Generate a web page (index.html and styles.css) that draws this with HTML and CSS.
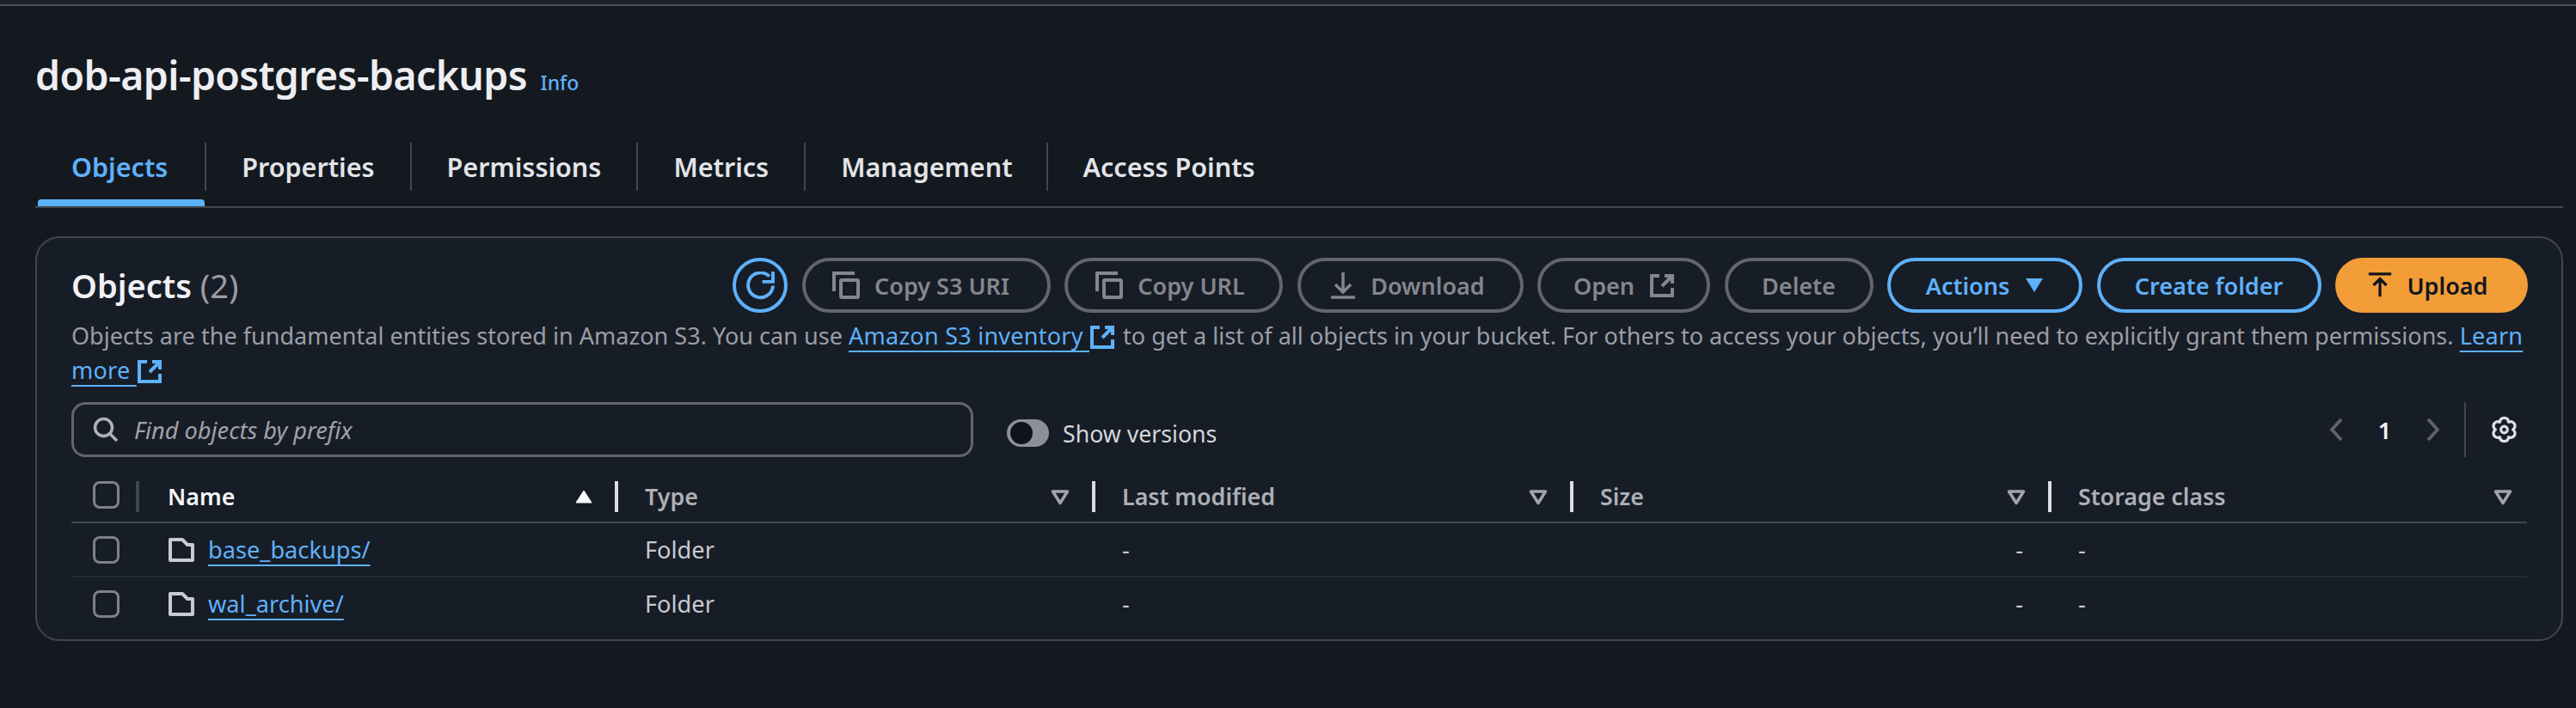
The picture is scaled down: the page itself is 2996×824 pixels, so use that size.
FILE: index.html
```html
<!DOCTYPE html>
<html lang="en">
<head>
<meta charset="utf-8">
<title>dob-api-postgres-backups</title>
<link rel="stylesheet" href="styles.css">
</head>
<body>
<svg width="0" height="0" class="defs">
  <symbol id="ext" viewBox="0 0 28 28"><path d="M11 3H2v23h24v-9M17 3h9v9M26 3 14 15" fill="none" stroke="currentColor" stroke-width="4"/></symbol>
  <symbol id="copy" viewBox="0 0 32 32"><path d="M26 2H2v21" fill="none" stroke="currentColor" stroke-width="4"/><rect x="10" y="10" width="20" height="20" rx="1" fill="none" stroke="currentColor" stroke-width="4"/></symbol>
  <symbol id="filter" viewBox="0 0 22 18"><path d="M2.500 2h17L11 15.500z" fill="none" stroke="currentColor" stroke-width="3.500" stroke-linejoin="round"/></symbol>
  <symbol id="folder" viewBox="0 0 30 28"><path d="M2 2h14l6 6h6v18H2z" fill="none" stroke="currentColor" stroke-width="4" stroke-linejoin="round"/></symbol>
</svg>
<div class="topstrip"></div>
<main class="page">
  <h1 class="title">dob-api-postgres-backups <a class="info">Info</a></h1>
  <nav class="tabs">
    <a class="tab tab-active">Objects</a>
    <a class="tab">Properties</a>
    <a class="tab">Permissions</a>
    <a class="tab">Metrics</a>
    <a class="tab tab-mgmt">Management</a>
    <a class="tab tab-last">Access Points</a>
  </nav>
  <section class="card">
    <div class="head">
      <h2 class="heading">Objects <span class="count">(2)</span></h2>
      <div class="actions">
        <button class="btn btn-round"><svg width="33" height="33" viewBox="0 0 32 32"><path d="M26 5.500A14 14 0 1 0 30 16" fill="none" stroke="currentColor" stroke-width="3.800"/><path d="M18 11.500h12V0" fill="none" stroke="currentColor" stroke-width="3.800"/></svg></button>
        <button class="btn btn-off btn-s3"><svg class="ic" width="32" height="32"><use href="#copy"/></svg>Copy S3 URI</button>
        <button class="btn btn-off btn-url"><svg class="ic" width="32" height="32"><use href="#copy"/></svg>Copy URL</button>
        <button class="btn btn-off btn-dl"><svg class="ic" width="30" height="32" viewBox="0 0 30 32"><path d="M15 1v22M6 15l9 9 9-9M1 30h28" fill="none" stroke="currentColor" stroke-width="3.500"/></svg>Download</button>
        <button class="btn btn-off btn-open">Open<svg class="ic-r" width="28" height="28"><use href="#ext"/></svg></button>
        <button class="btn btn-off btn-del">Delete</button>
        <button class="btn btn-line btn-act">Actions<svg class="ic-r" width="22" height="18" viewBox="0 0 22 18"><path d="M1 1h20L11 17z" fill="currentColor"/></svg></button>
        <button class="btn btn-line btn-new">Create folder</button>
        <button class="btn btn-primary"><svg class="ic" width="28" height="30" viewBox="0 0 28 32"><path d="M0 2h28M14 30V9M6 16l8-8 8 8" fill="none" stroke="currentColor" stroke-width="3.500"/></svg>Upload</button>
      </div>
    </div>
    <p class="desc">Objects are the fundamental entities stored in Amazon S3. You can use <a class="lnk">Amazon S3 inventory </a><svg class="ext" width="28" height="28"><use href="#ext"/></svg> to get a list of all objects in your bucket. For others to access your objects, you’ll need to explicitly grant them permissions. <a class="lnk">Learn more </a><svg class="ext" width="28" height="28"><use href="#ext"/></svg></p>
    <div class="tools">
      <div class="search">
        <svg width="30" height="30" viewBox="0 0 30 30"><circle cx="12.500" cy="12.500" r="10" fill="none" stroke="currentColor" stroke-width="3.500"/><path d="m20 20 8 8" fill="none" stroke="currentColor" stroke-width="3.500"/></svg>
        <span class="placeholder">Find objects by prefix</span>
      </div>
      <div class="toggle"><span class="knob"></span></div>
      <span class="toggle-label">Show versions</span>
      <div class="pager">
        <svg width="16" height="26" viewBox="0 0 16 26"><path d="M14 1 3 13l11 12" fill="none" stroke="currentColor" stroke-width="3.800"/></svg>
        <span class="page-num">1</span>
        <svg width="16" height="26" viewBox="0 0 16 26"><path d="m2 1 11 12L2 25" fill="none" stroke="currentColor" stroke-width="3.800"/></svg>
      </div>
      <div class="settings">
        <svg width="31" height="32" viewBox="0 0 32 32"><path d="M10.750 6.910C11.500 .3 20.500 .3 21.250 6.910 27.350 4.250 31.850 12.050 26.500 16 31.850 19.950 27.350 27.750 21.250 25.090 20.500 31.700 11.500 31.700 10.750 25.090 4.650 27.750 .15 19.950 5.500 16 .15 12.050 4.650 4.250 10.750 6.910z" fill="none" stroke="currentColor" stroke-width="3.400" stroke-linejoin="round"/><circle cx="16" cy="16" r="4" fill="none" stroke="currentColor" stroke-width="3.200"/></svg>
      </div>
    </div>
    <div class="table">
      <div class="row row-head">
        <div class="cell-check"><span class="check"></span><i class="sep sep-dim"></i></div>
        <div class="th th-name">Name<svg class="sort" width="20" height="16" viewBox="0 0 20 16"><path d="M10 1 19 15H1z" fill="currentColor" stroke="currentColor" stroke-linejoin="round"/></svg><i class="sep"></i></div>
        <div class="th">Type<svg class="filt" width="22" height="18"><use href="#filter"/></svg><i class="sep"></i></div>
        <div class="th">Last modified<svg class="filt" width="22" height="18"><use href="#filter"/></svg><i class="sep"></i></div>
        <div class="th">Size<svg class="filt" width="22" height="18"><use href="#filter"/></svg><i class="sep"></i></div>
        <div class="th th-last">Storage class<svg class="filt" width="22" height="18"><use href="#filter"/></svg></div>
      </div>
      <div class="row row-body row-rule">
        <div class="cell-check"><span class="check"></span></div>
        <div class="td td-name"><svg class="folder" width="30" height="28"><use href="#folder"/></svg><a class="lnk">base_backups/</a></div>
        <div class="td">Folder</div>
        <div class="td">-</div>
        <div class="td td-size">-</div>
        <div class="td">-</div>
      </div>
      <div class="row row-body">
        <div class="cell-check"><span class="check"></span></div>
        <div class="td td-name"><svg class="folder" width="30" height="28"><use href="#folder"/></svg><a class="lnk">wal_archive/</a></div>
        <div class="td">Folder</div>
        <div class="td">-</div>
        <div class="td td-size">-</div>
        <div class="td">-</div>
      </div>
    </div>
  </section>
</main>
</body>
</html>
```
FILE: styles.css
```css
* { box-sizing: border-box; }
html, body { margin: 0; padding: 0; }
body {
  height: 824px;
  overflow: hidden;
  background: #141920;
  color: #e9e9ed;
  font-family: "Noto Sans", "Open Sans", sans-serif;
  font-size: 28px;
}
.defs { position: absolute; }
.topstrip { height: 7px; background: #1c222b; border-bottom: 2px solid #474c55; }
.page { padding: 0 15px 0 41px; }
.title {
  margin: 0;
  padding-top: 49px;
  height: 159px;
  font-size: 46.400px;
  line-height: 62px;
  font-weight: 600;
  color: #eeeef2;
  letter-spacing: -0.6px;
}
.info { font-size: 23px; font-weight: 500; color: #5eb1fb; margin-left: 4px; letter-spacing: 0; }
.tabs { display: flex; height: 76px; padding-left: 3px; border-bottom: 2px solid #414750; position: relative; }
.tab {
  flex: none;
  height: 56px;
  padding: 0 41px;
  font-size: 30.500px;
  line-height: 57px;
  font-weight: 600;
  color: #e3e4e9;
  border-right: 2px solid #414750;
  position: relative;
}
.tab-last { border-right: 0; }
.tab-mgmt { padding-right: 39px; }
.tab-active { color: #5eb1fb; padding: 0 43px 0 39px; }
.tab-active::after {
  content: "";
  position: absolute;
  left: 0; right: 0; top: 66px;
  height: 8px;
  border-radius: 4px 4px 0 0;
  background: #5eb1fb;
}
.card {
  margin-top: 33px;
  height: 471px;
  background: #171d26;
  border: 2px solid #42474f;
  border-radius: 28px;
  padding: 23px 40px 0 40px;
}
.head { display: flex; align-items: center; justify-content: space-between; height: 64px; }
.heading { margin: 0; font-size: 38px; line-height: 50px; font-weight: 600; color: #f1f1f5; }
.count { font-weight: 400; color: #9b9ca4; }
.actions { display: flex; gap: 16.500px; margin-right: -1px; }
.btn {
  display: flex;
  align-items: center;
  justify-content: center;
  height: 64px;
  border-radius: 32px;
  border: 4px solid #5eb1fb;
  background: transparent;
  color: #5eb1fb;
  font: 600 27px "Noto Sans", sans-serif;
  padding: 0;
}
.btn-round { width: 64px; }
.btn-off { border-color: #62656c; color: #85868d; }
.btn-s3 { width: 289px; padding-right: 12px; }
.btn-url { width: 254px; padding-right: 8px; }
.btn-dl { width: 263px; padding-right: 6px; }
.btn-open { width: 201px; }
.btn-del { width: 173px; }
.btn-act { width: 227px; }
.btn-new { width: 261px; }
.btn-primary { width: 224px; background: #f29d38; border-color: #f29d38; color: #12161c; padding-right: 8px; }
.ic { margin-right: 17px; }
.ic-r { margin-left: 18px; }
.desc { margin: 7px 0 0; font-size: 27px; line-height: 40px; letter-spacing: 0.03px; color: #9c9da6; }
.lnk { color: #5eb1fb; text-decoration: underline; text-decoration-thickness: 2px; text-underline-offset: 7px; }
.desc .lnk { letter-spacing: 0.25px; }
.ext { color: #5eb1fb; vertical-align: -5px; margin: 0 3px 0 1px; }
.tools { display: flex; align-items: center; height: 64px; margin-top: 17px; }
.search {
  display: flex;
  align-items: center;
  gap: 18px;
  width: 1049px;
  height: 64px;
  padding-left: 22px;
  border: 3px solid #62656c;
  border-radius: 16px;
  color: #b0b1b9;
}
.placeholder { font-style: italic; font-size: 27.200px; color: #a1a2aa; }
.toggle { width: 49px; height: 32px; margin: 8px 0 0 39px; border-radius: 16px; background: #8f9097; padding: 3px 0 0 4px; }
.knob { display: block; width: 26px; height: 26px; border-radius: 50%; background: #0f141a; }
.toggle-label { margin: 8px 0 0 16px; font-size: 26.700px; color: #d5d6dc; }
.pager { display: flex; align-items: center; margin-left: auto; color: #5f6269; }
.page-num { width: 97px; text-align: center; font-size: 27px; font-weight: 600; color: #f4f4f7; }
.settings {
  display: flex;
  align-items: center;
  height: 64px;
  margin-left: 28px;
  padding-left: 29px;
  padding-right: 11px;
  border-left: 2px solid #42474f;
  color: #dedfe4;
}
.table { margin-top: 28px; }
.row { display: grid; grid-template-columns: 77px 557px 555px 556px 556px 556px; }
.row-head { height: 49px; border-bottom: 2px solid #414750; }
.row-body { height: 63px; align-items: center; border-bottom: 2px solid transparent; }
.row-rule { border-bottom-color: #252b35; }
.cell-check { position: relative; height: 100%; padding: 0 0 0 25px; }
.row-body .cell-check { display: flex; align-items: center; }
.check { display: block; width: 31px; height: 32px; border: 3px solid #7f8188; border-radius: 8px; }
.sep { position: absolute; top: 0; right: -2px; width: 4px; height: 36px; background: #dcdde2; }
.sep-dim { background: #414750; }
.th {
  position: relative;
  display: flex;
  align-items: flex-start;
  padding-left: 33px;
  font-size: 26.800px;
  line-height: 36px;
  font-weight: 600;
  color: #aeafb7;
}
.th-name { color: #f6f6f8; padding-left: 35px; }
.filt { position: absolute; right: 28px; top: 10px; color: #a2a3ab; }
.th-last .filt { right: 18px; }
.sort { position: absolute; right: 28px; top: 10px; color: #fafafa; }
.td { font-size: 27.200px; padding-left: 33px; color: #c9cad1; }
.td-name { display: flex; align-items: center; gap: 16px; padding-left: 36px; }
.td-size { text-align: right; padding-right: 31px; }
.folder { color: #c9cad1; }
```
